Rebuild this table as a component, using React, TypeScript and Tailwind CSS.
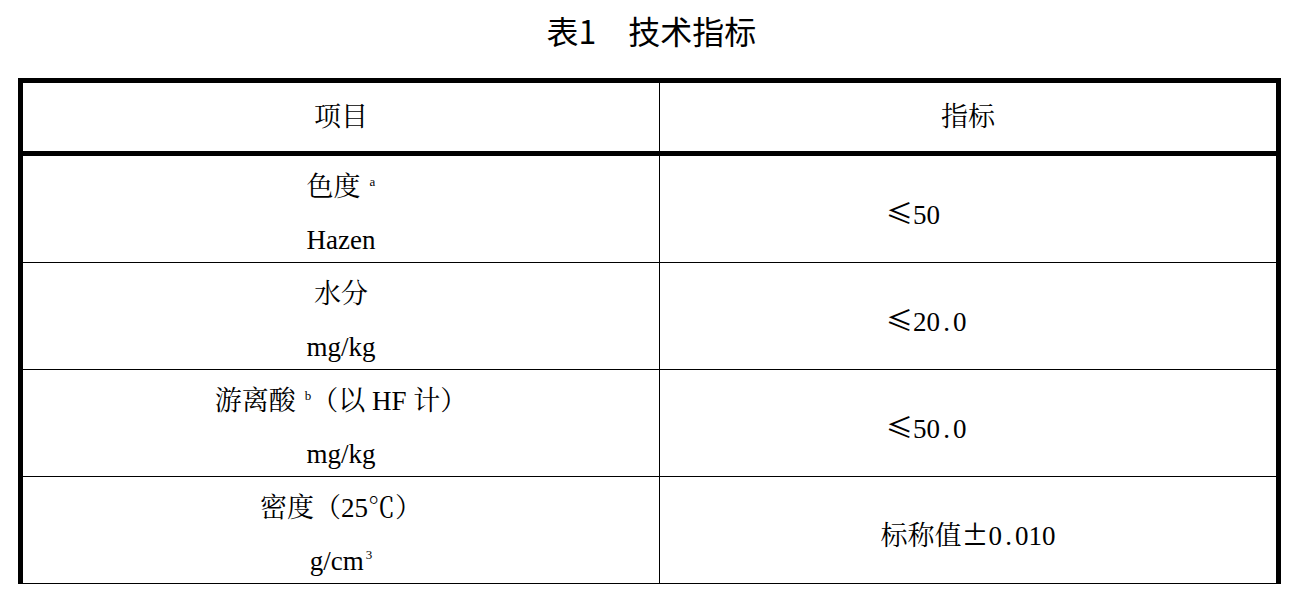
const body = {
  fontFamily: '"Liberation Serif", "Noto Serif CJK SC", "Noto Sans CJK SC", serif',
};
const cjk = { fontFamily: '"Noto Sans CJK SC", sans-serif' };

const Dot = () => <span className="inline-block w-[13px] text-center">.</span>;

const Sup = ({ children }: { children: React.ReactNode }) => (
  <span className="relative -top-[10px] ml-[9px] text-[13px] leading-none">{children}</span>
);

const rows = [
  {
    name: (
      <>
        色度<Sup>a</Sup>
      </>
    ),
    unit: <>Hazen</>,
    value: (
      <>
        <span style={cjk}>≤</span>50
      </>
    ),
    center: false,
  },
  {
    name: <>水分</>,
    unit: <>mg/kg</>,
    value: (
      <>
        <span style={cjk}>≤</span>20<Dot />0
      </>
    ),
    center: false,
  },
  {
    name: (
      <>
        游离酸<Sup>b</Sup>（以 HF 计）
      </>
    ),
    unit: <>mg/kg</>,
    value: (
      <>
        <span style={cjk}>≤</span>50<Dot />0
      </>
    ),
    center: false,
  },
  {
    name: <>密度（25℃）</>,
    unit: (
      <>
        g/cm<span className="relative -top-[11px] ml-[2px] text-[13px] leading-none">3</span>
      </>
    ),
    value: (
      <>
        标称值<span style={cjk}>±</span>0<Dot />010
      </>
    ),
    center: true,
  },
];

export default function App() {
  return (
    <div className="min-h-screen bg-white text-black" style={body}>
      <h1
        className="pt-[14px] text-center text-[32px] leading-[32px] font-normal"
        style={cjk}
      >
        表1　技术指标
      </h1>

      <div className="ml-[18px] mt-[32px] w-[1263px] border-x-[5px] border-t-[5px] border-black text-[27px]">
        {/* header */}
        <div className="flex h-[73px] border-b-[5px] border-black">
          <div className="flex w-[637px] items-center justify-center border-r border-black">项目</div>
          <div className="flex flex-1 items-center justify-center">指标</div>
        </div>

        {rows.map((r, i) => (
          <div key={i} className="flex h-[107px] border-b border-black">
            <div className="flex w-[637px] flex-col items-center border-r border-black pt-[5px] leading-[53px]">
              <div className="whitespace-pre">{r.name}</div>
              <div className="whitespace-pre">{r.unit}</div>
            </div>
            <div
              className={
                r.center
                  ? "flex flex-1 items-center justify-center pt-[10px]"
                  : "flex flex-1 items-center pt-[10px] pl-[226px]"
              }
            >
              <span>{r.value}</span>
            </div>
          </div>
        ))}
      </div>
    </div>
  );
}
